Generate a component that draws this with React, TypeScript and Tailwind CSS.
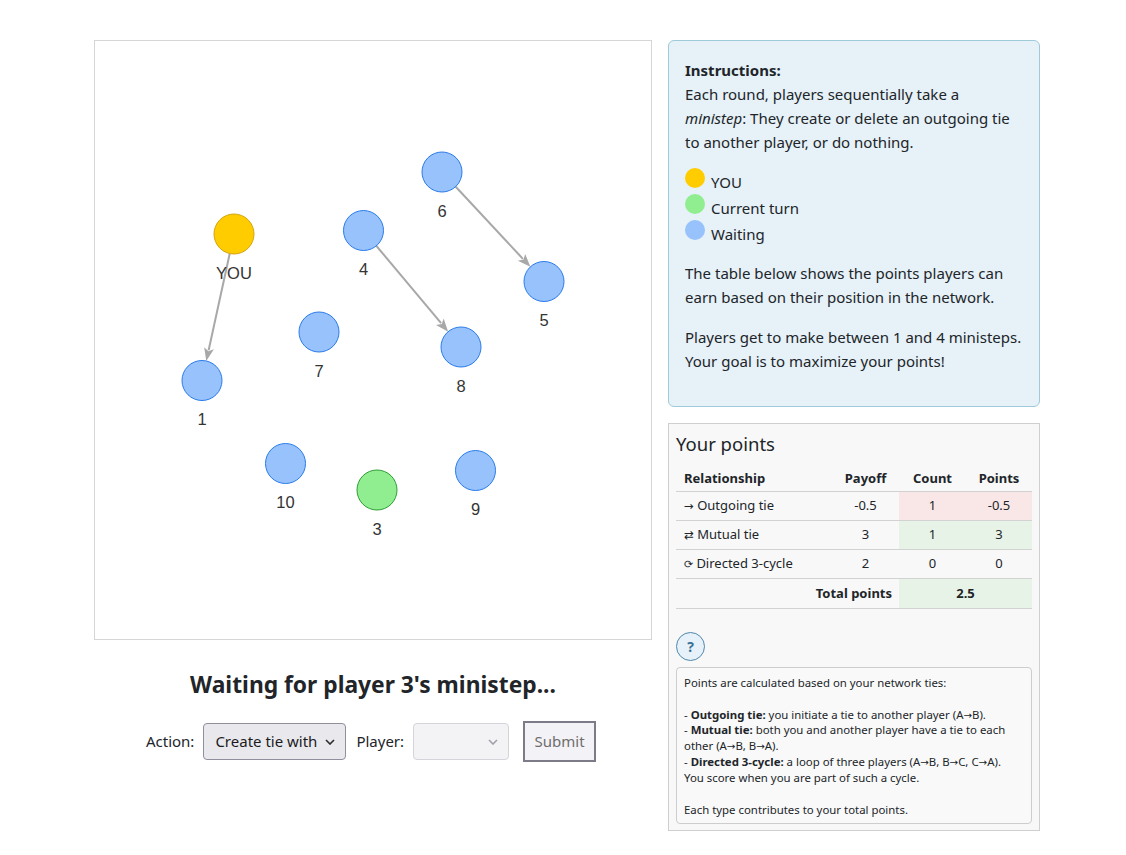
import React from 'react';

type Node = { id: string; x: number; y: number; kind: 'you' | 'turn' | 'wait' };

const nodes: Node[] = [
  { id: 'YOU', x: 234, y: 234, kind: 'you' },
  { id: '6', x: 442, y: 172, kind: 'wait' },
  { id: '4', x: 363.5, y: 230.5, kind: 'wait' },
  { id: '5', x: 544, y: 281.5, kind: 'wait' },
  { id: '7', x: 319, y: 332, kind: 'wait' },
  { id: '8', x: 461, y: 347, kind: 'wait' },
  { id: '1', x: 202, y: 380.5, kind: 'wait' },
  { id: '10', x: 285.5, y: 463.5, kind: 'wait' },
  { id: '3', x: 377, y: 490, kind: 'turn' },
  { id: '9', x: 475.5, y: 470.5, kind: 'wait' },
];

const edges: [string, string][] = [
  ['YOU', '1'],
  ['4', '8'],
  ['6', '5'],
];

const R = 20;

const fills = {
  you: { fill: '#ffcc00', stroke: '#d4a514' },
  turn: { fill: '#90ee90', stroke: '#2f9e35' },
  wait: { fill: '#97c2fc', stroke: '#2b7ce9' },
};

function Edge({ from, to }: { from: Node; to: Node }) {
  const dx = to.x - from.x;
  const dy = to.y - from.y;
  const len = Math.hypot(dx, dy);
  const ux = dx / len;
  const uy = dy / len;
  const tipX = to.x - ux * R;
  const tipY = to.y - uy * R;
  const baseX = tipX - ux * 13;
  const baseY = tipY - uy * 13;
  const px = -uy * 5;
  const py = ux * 5;
  return (
    <g>
      <line x1={from.x} y1={from.y} x2={baseX + ux * 2} y2={baseY + uy * 2} stroke="#a8a8a8" strokeWidth={2} />
      <polygon
        points={`${tipX},${tipY} ${baseX + px},${baseY + py} ${baseX + ux * 3},${baseY + uy * 3} ${baseX - px},${baseY - py}`}
        fill="#a8a8a8"
      />
    </g>
  );
}

function Network() {
  const byId = (id: string) => nodes.find((n) => n.id === id)!;
  return (
    <svg width={556} height={598} viewBox="95 41 556 598" className="block">
      {edges.map(([a, b]) => (
        <Edge key={a + b} from={byId(a)} to={byId(b)} />
      ))}
      {nodes.map((n) => (
        <circle key={n.id} cx={n.x} cy={n.y} r={R} fill={fills[n.kind].fill} stroke={fills[n.kind].stroke} strokeWidth={1} />
      ))}
      {nodes.map((n) => (
        <text
          key={'l' + n.id}
          x={n.x}
          y={n.y + 44.5}
          textAnchor="middle"
          fontFamily="'Liberation Sans', Arial, sans-serif"
          fontSize={16.5}
          fill="#343434"
        >
          {n.id}
        </text>
      ))}
    </svg>
  );
}

function Chevron({ color }: { color: string }) {
  return (
    <svg width="10" height="6" viewBox="0 0 10 6" className="absolute right-[10px] top-1/2 -translate-y-1/2">
      <path d="M1 1l4 4 4-4" fill="none" stroke={color} strokeWidth="1.6" />
    </svg>
  );
}

// arrows drawn in DejaVu so they keep a normal width
function Ar({ c = '→' }: { c?: string }) {
  return <span className="font-['DejaVu_Sans',sans-serif] text-[0.9em] leading-[0]">{c}</span>;
}

const legend = [
  { label: 'YOU', color: 'bg-[#ffcc00]' },
  { label: 'Current turn', color: 'bg-[#90ee90]' },
  { label: 'Waiting', color: 'bg-[#97c2fc]' },
];

export default function App() {
  return (
    <div className="min-h-screen bg-white font-['Noto_Sans',sans-serif] text-[#212529]">
      <div className="flex gap-4 pl-[94px] pt-10">
        {/* left: network + controls */}
        <div className="flex w-[558px] flex-col">
          <div className="h-[600px] border border-[#d6d6d6] bg-white">
            <Network />
          </div>
          <h4 className="mt-[30px] text-center text-[22.8px] font-bold leading-[29px]">Waiting for player 3's ministep...</h4>
          <div className="mt-[22px] flex items-center justify-center pr-[4px] text-[15px]">
            <span className="mr-[9px]">Action:</span>
            <div className="relative mr-[10px] flex h-[37px] w-[143px] items-center rounded-[4px] border border-[#8f8f9d] bg-[#e9e9ed] pl-[11px] text-[#1b1b1f]">
              Create tie with
              <Chevron color="#2b2b2b" />
            </div>
            <span className="mr-[9px]">Player:</span>
            <div className="relative mr-[14px] h-[37px] w-[96px] rounded-[4px] border border-[#d4d4da] bg-[#f3f3f5]">
              <Chevron color="#a0a0a8" />
            </div>
            <div className="flex h-[41px] w-[73px] items-center justify-center border-2 border-[#7d7b87] bg-[#f3f2f6] text-[#6d6d6d]">
              Submit
            </div>
          </div>
        </div>

        {/* right column */}
        <div className="flex w-[372px] flex-col gap-4">
          <div className="rounded-[6px] border border-[#9fcad9] bg-[#e6f1f8] px-4 pb-[33px] pt-[17px] text-[15px] leading-[24px]">
            <div className="whitespace-nowrap">
              <b>Instructions:</b>
              <br />
              Each round, players sequentially take a
              <br />
              <i>ministep</i>: They create or delete an outgoing tie
              <br />
              to another player, or do nothing.
            </div>
            <div className="mt-[14px]">
              {legend.map((l) => (
                <div key={l.label} className="flex h-[26px] items-start gap-[6px]">
                  <span className={`h-5 w-5 rounded-full ${l.color}`} />
                  <span className="mt-[3px] leading-[22px]">{l.label}</span>
                </div>
              ))}
            </div>
            <p className="mt-[15px] whitespace-nowrap">
              The table below shows the points players can
              <br />
              earn based on their position in the network.
            </p>
            <p className="mt-4 whitespace-nowrap">
              Players get to make between 1 and 4 ministeps.
              <br />
              Your goal is to maximize your points!
            </p>
          </div>

          <div className="border border-[#cfcfcf] bg-[#f8f8f8] px-[7px] pb-[6px] pt-2">
            <h5 className="text-[18.5px] leading-[24px]">Your points</h5>
            <table className="mt-[10px] w-[356px] table-fixed border-collapse text-[13px]">
              <colgroup>
                <col className="w-[156px]" />
                <col className="w-[67px]" />
                <col className="w-[67px]" />
                <col className="w-[66px]" />
              </colgroup>
              <thead>
                <tr className="h-[25px] border-b border-[#d2d2d2] font-bold">
                  <th className="px-2 text-left">Relationship</th>
                  <th className="text-center">Payoff</th>
                  <th className="text-center">Count</th>
                  <th className="text-center">Points</th>
                </tr>
              </thead>
              <tbody>
                <tr className="h-[29.3px] border-b border-[#d2d2d2]">
                  <td className="px-2">
                    <Ar /> Outgoing tie
                  </td>
                  <td className="text-center">-0.5</td>
                  <td className="bg-[#f9e7e7] text-center">1</td>
                  <td className="bg-[#f9e7e7] text-center">-0.5</td>
                </tr>
                <tr className="h-[29.3px] border-b border-[#d2d2d2]">
                  <td className="px-2">
                    <Ar c="⇄" /> Mutual tie
                  </td>
                  <td className="text-center">3</td>
                  <td className="bg-[#e8f3e8] text-center">1</td>
                  <td className="bg-[#e8f3e8] text-center">3</td>
                </tr>
                <tr className="h-[29.3px] border-b border-[#d2d2d2]">
                  <td className="px-2">
                    <span className="text-[11px]">⟳</span> Directed 3-cycle
                  </td>
                  <td className="text-center">2</td>
                  <td className="text-center">0</td>
                  <td className="text-center">0</td>
                </tr>
                <tr className="h-[29.3px] border-b border-[#d2d2d2] font-bold">
                  <td colSpan={2} className="pr-[7px] text-right">
                    Total points
                  </td>
                  <td colSpan={2} className="bg-[#e8f3e8] text-center">
                    2.5
                  </td>
                </tr>
              </tbody>
            </table>

            <div className="mt-[23px] flex h-[29px] w-[29px] items-center justify-center rounded-full border-[1.5px] border-[#4f87aa] bg-[#e6f1f9] text-[14px] font-bold text-[#3a6f93]">
              ?
            </div>
            <div className="mt-[6px] whitespace-nowrap rounded-[4px] border border-[#cdcdcd] bg-[#f9f9f9] px-[7px] pb-[5px] pt-[7px] text-[11.4px] leading-[15.9px]">
              Points are calculated based on your network ties:
              <br />
              <br />- <b>Outgoing tie:</b> you initiate a tie to another player (A<Ar />B).
              <br />- <b>Mutual tie:</b> both you and another player have a tie to each
              <br />
              other (A<Ar />B, B<Ar />A).
              <br />- <b>Directed 3-cycle:</b> a loop of three players (A<Ar />B, B<Ar />C, C<Ar />A).
              <br />
              You score when you are part of such a cycle.
              <br />
              <br />
              Each type contributes to your total points.
            </div>
          </div>
        </div>
      </div>
    </div>
  );
}
